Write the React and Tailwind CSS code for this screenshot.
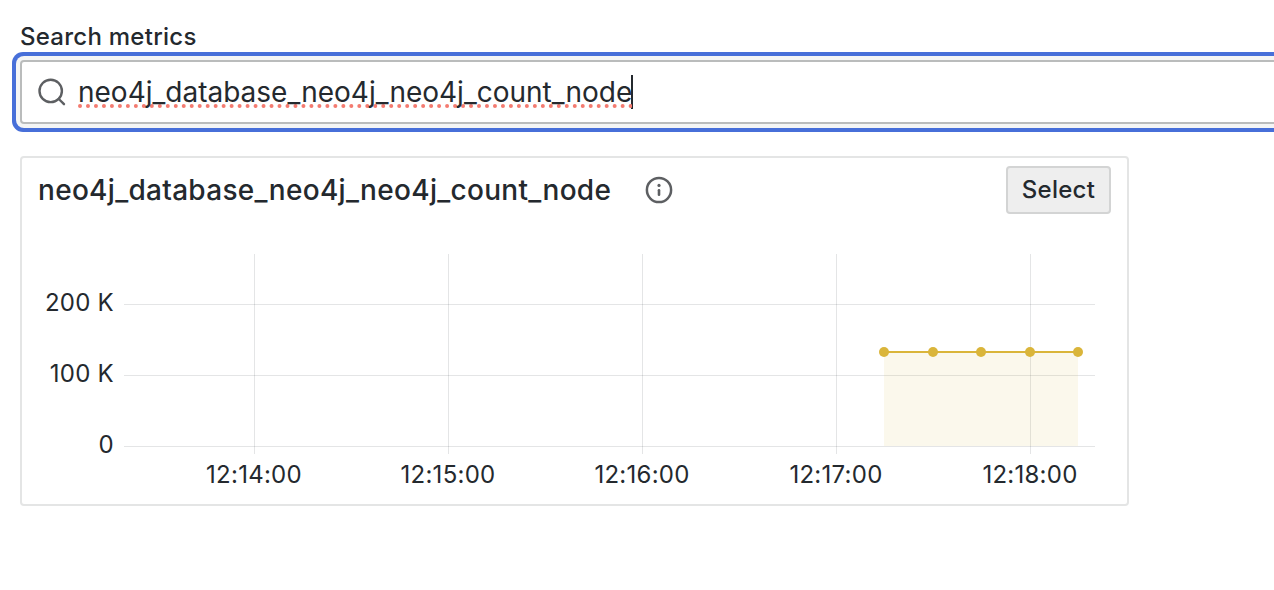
import React from "react";

const GRID_X = [
  { x: 254.5, label: "12:14:00" },
  { x: 448.5, label: "12:15:00" },
  { x: 642.5, label: "12:16:00" },
  { x: 836.5, label: "12:17:00" },
  { x: 1030.5, label: "12:18:00" },
];
const GRID_Y = [
  { y: 304.5, label: "200 K" },
  { y: 375.5, label: "100 K" },
  { y: 446.5, label: "0" },
];
const POINTS = [884, 933, 981, 1030, 1078];

function SearchIcon() {
  return (
    <svg className="h-7 w-7 shrink-0" viewBox="0 0 28 28" fill="none" stroke="#5d5f62" strokeWidth="2.4" strokeLinecap="round">
      <circle cx="12.7" cy="12.9" r="11.2" />
      <path d="M20.8 21 26 26.2" />
    </svg>
  );
}

function InfoIcon() {
  return (
    <svg className="h-7 w-7 shrink-0" viewBox="0 0 28 28" fill="none">
      <circle cx="14" cy="14" r="12.1" stroke="#5d5f62" strokeWidth="2.5" />
      <circle cx="14" cy="9.4" r="1.6" fill="#5d5f62" />
      <path d="M14 14.2v4.5" stroke="#5d5f62" strokeWidth="2.6" strokeLinecap="round" />
    </svg>
  );
}

function Chart() {
  return (
    <svg className="block h-[290px] w-[1105px]" viewBox="22 214 1105 290">
      <g stroke="#24292e" strokeOpacity="0.12" strokeWidth="1">
        {GRID_Y.map((g) => (
          <path key={g.y} d={`M124 ${g.y}H1095`} />
        ))}
        {GRID_X.map((g) => (
          <path key={g.x} d={`M${g.x} 254V454`} />
        ))}
      </g>
      <path d="M884 352H1078V446H884Z" fill="#d9bf48" fillOpacity="0.105" />
      <path d="M884 352H1078" stroke="#dab53a" strokeWidth="2" />
      {POINTS.map((x) => (
        <circle key={x} cx={x} cy="352" r="5" fill="#dab53a" />
      ))}
      <g fill="#24292e" className="text-[24px] tracking-[0.01071em]">
        {GRID_Y.map((g) => (
          <text key={g.label} x="114" y={g.y + 6.5} textAnchor="end">
            {g.label}
          </text>
        ))}
        {GRID_X.map((g) => (
          <text key={g.label} x={g.x - 0.5} y="483" textAnchor="middle">
            {g.label}
          </text>
        ))}
      </g>
    </svg>
  );
}

export default function App() {
  return (
    <main className="h-[590px] w-full overflow-hidden bg-white pl-5 pt-[21px] font-['Inter','Liberation_Sans',sans-serif] text-[#24292e]">
      <label className="block h-[39px] text-[24px] font-medium leading-8 tracking-[0.01071em]">Search metrics</label>
      <div className="flex h-16 w-[1300px] items-center gap-3 rounded-[4px] border-2 border-[#babcbc] bg-white pl-4 shadow-[0_0_0_4px_#f4f5f5,0_0_0_8px_#476fd9]">
        <SearchIcon />
        <div className="relative flex items-center">
          <svg className="absolute left-0 top-7 h-1.5 w-[554px]" viewBox="0 0 554 6" aria-hidden="true">
            <path d="M2 3H554" stroke="#f47b70" strokeWidth="4" strokeLinecap="round" strokeDasharray="0 7.98" />
          </svg>
          <span className="relative text-[28px] leading-8">neo4j_database_neo4j_neo4j_count_node</span>
          <span className="-ml-px h-[34px] w-0.5 bg-[#24292e]" />
        </div>
      </div>
      <section className="mt-8 h-[350px] w-[1109px] rounded-[4px] border-2 border-[#e4e5e5]">
        <header className="flex h-14 items-end pl-4 pr-4">
          <div className="flex h-12 flex-1 items-center">
            <h2 className="text-[28px] font-medium leading-9 tracking-[0.01071em]">neo4j_database_neo4j_neo4j_count_node</h2>
            <div className="ml-[34px] flex">
              <InfoIcon />
            </div>
          </div>
          <button className="h-12 w-[105px] rounded-[4px] border-2 border-[#d3d4d4] bg-[#eeeeee] text-[24px] font-medium tracking-[0.01071em]">
            Select
          </button>
        </header>
        <Chart />
      </section>
    </main>
  );
}
